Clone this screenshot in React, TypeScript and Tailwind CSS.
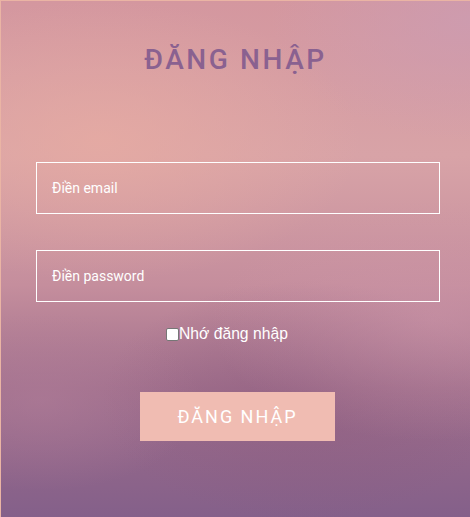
export default function App() {
  return (
    <div
      className="w-[470px] h-[517px] overflow-hidden relative border-t border-l border-[#eab4a4] flex flex-col items-center"
      style={{
        fontFamily: "Roboto, 'Noto Sans', sans-serif",
        background:
          "radial-gradient(ellipse 260px 140px at 100px 140px, rgba(232,172,162,0.75), rgba(232,172,162,0) 100%), radial-gradient(ellipse 200px 120px at 470px 20px, rgba(204,156,178,0.8), rgba(204,156,178,0) 100%), radial-gradient(ellipse 220px 120px at 430px 320px, rgba(205,150,170,0.5), rgba(205,150,170,0) 100%), radial-gradient(ellipse 160px 90px at 40px 400px, rgba(180,128,155,0.5), rgba(180,128,155,0) 100%), radial-gradient(ellipse 200px 120px at 300px 400px, rgba(140,90,125,0.45), rgba(140,90,125,0) 100%), linear-gradient(180deg, #d4979f 0%, #d8a3a7 30%, #c58e9d 55%, #a06f8c 75%, #8f658a 90%, #84608a 100%)",
      }}
    >
      <h1 className="mt-[42px] text-[28px] leading-[34px] font-medium tracking-[2.6px] text-[#8a6190]">
        ĐĂNG NHẬP
      </h1>
      <div className="mt-[85px] self-start ml-[35px] w-[404px] flex flex-col gap-[36px]">
        <div className="h-[52px] border border-white flex items-center pl-[15px] text-[14px] text-white">
          Điền email
        </div>
        <div className="h-[52px] border border-white flex items-center pl-[15px] text-[14px] text-white">
          Điền password
        </div>
      </div>
      <label
        className="mt-[22px] self-start ml-[165px] flex items-center text-[15.7px] leading-[20px] text-white"
        style={{ fontFamily: "'Liberation Sans', Arial, sans-serif" }}
      >
        <span className="w-[13px] h-[13px] bg-white rounded-[2px] border border-[#767676]" />
        Nhớ đăng nhập
      </label>
      <button className="mt-[48px] self-start ml-[139px] w-[195px] h-[49px] bg-[#f0bcb2] text-white text-[18px] tracking-[2px] flex items-center justify-center">
        ĐĂNG NHẬP
      </button>
    </div>
  );
}
